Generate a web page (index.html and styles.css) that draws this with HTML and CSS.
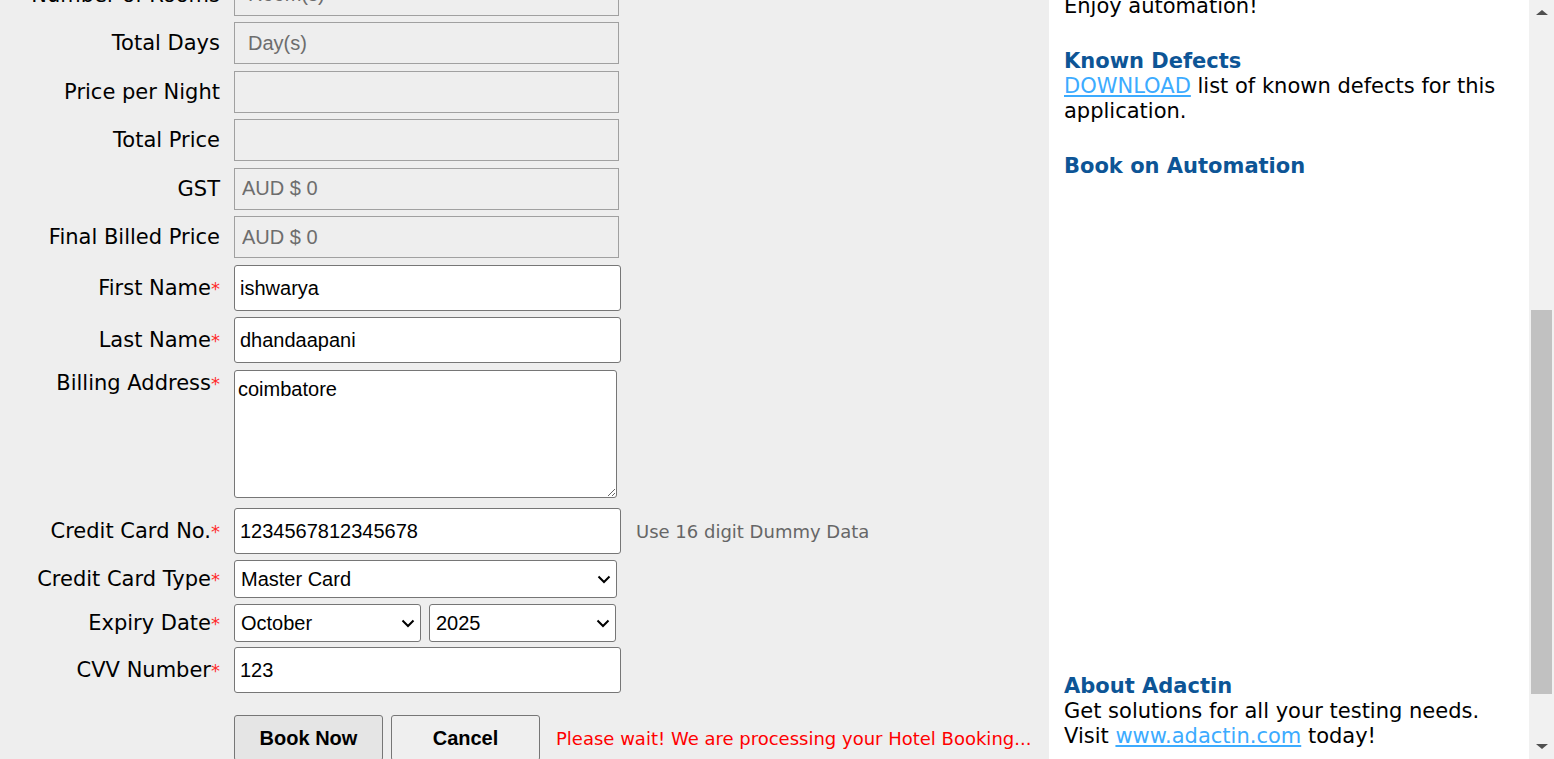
FILE: index.html
```html
<!DOCTYPE html>
<html lang="en">
<head>
<meta charset="utf-8">
<title>Book A Hotel</title>
<link rel="stylesheet" href="styles.css">
</head>
<body>
<div class="page">
  <main class="main">
    <form class="form">
      <div class="row row-ro first">
        <label class="lbl">Number of Rooms</label>
        <input class="ro ro-ph" type="text" value="Room(s)" readonly>
      </div>
      <div class="row row-ro">
        <label class="lbl">Total Days</label>
        <input class="ro ro-ph" type="text" value="Day(s)" readonly>
      </div>
      <div class="row row-ro">
        <label class="lbl">Price per Night</label>
        <input class="ro" type="text" value="" readonly>
      </div>
      <div class="row row-ro">
        <label class="lbl">Total Price</label>
        <input class="ro" type="text" value="" readonly>
      </div>
      <div class="row row-ro">
        <label class="lbl">GST</label>
        <input class="ro" type="text" value="AUD $ 0" readonly>
      </div>
      <div class="row row-ro last-ro">
        <label class="lbl">Final Billed Price</label>
        <input class="ro" type="text" value="AUD $ 0" readonly>
      </div>
      <div class="row row-in">
        <label class="lbl">First Name<span class="req">*</span></label>
        <input class="txt" type="text" value="ishwarya">
      </div>
      <div class="row row-in gap7">
        <label class="lbl">Last Name<span class="req">*</span></label>
        <input class="txt" type="text" value="dhandaapani">
      </div>
      <div class="row row-area">
        <label class="lbl">Billing Address<span class="req">*</span></label>
        <textarea class="area">coimbatore</textarea>
      </div>
      <div class="row row-in">
        <label class="lbl">Credit Card No.<span class="req">*</span></label>
        <input class="txt" type="text" value="1234567812345678">
        <span class="hint">Use 16 digit Dummy Data</span>
      </div>
      <div class="row row-sel">
        <label class="lbl">Credit Card Type<span class="req">*</span></label>
        <span class="selwrap">
          <select class="sel sel-wide"><option>Master Card</option></select>
          <svg class="chev" width="14" height="9" viewBox="0 0 14 9"><path d="M1.5 1.5 L7 7 L12.5 1.5" fill="none" stroke="#000" stroke-width="2"/></svg>
        </span>
      </div>
      <div class="row row-sel">
        <label class="lbl">Expiry Date<span class="req">*</span></label>
        <div class="pair">
          <span class="selwrap">
            <select class="sel sel-month"><option>October</option></select>
            <svg class="chev" width="14" height="9" viewBox="0 0 14 9"><path d="M1.5 1.5 L7 7 L12.5 1.5" fill="none" stroke="#000" stroke-width="2"/></svg>
          </span>
          <span class="selwrap">
            <select class="sel sel-year"><option>2025</option></select>
            <svg class="chev" width="14" height="9" viewBox="0 0 14 9"><path d="M1.5 1.5 L7 7 L12.5 1.5" fill="none" stroke="#000" stroke-width="2"/></svg>
          </span>
        </div>
      </div>
      <div class="row row-in cvv">
        <label class="lbl">CVV Number<span class="req">*</span></label>
        <input class="txt" type="text" value="123">
      </div>
      <div class="row row-btn">
        <span class="lbl"></span>
        <div class="btns">
          <button type="button" class="btn btn-book">Book Now</button>
          <button type="button" class="btn btn-cancel">Cancel</button>
          <span class="wait">Please wait! We are processing your Hotel Booking...</span>
        </div>
      </div>
    </form>
  </main>
  <aside class="side">
    <p class="side-text first-line">Enjoy automation!</p>
    <h3 class="side-head">Known Defects</h3>
    <p class="side-text"><a class="link" href="#">DOWNLOAD</a> list of known defects for this application.</p>
    <h3 class="side-head">Book on Automation</h3>
    <div class="book-space"></div>
    <h3 class="side-head tight">About Adactin</h3>
    <p class="side-text">Get solutions for all your testing needs.<br>Visit <a class="link" href="#">www.adactin.com</a> today!</p>
  </aside>
  <div class="scrollbar">
    <span class="arrow arrow-up"></span>
    <div class="track"><div class="thumb"></div></div>
    <span class="arrow arrow-down"></span>
  </div>
</div>
</body>
</html>
```
FILE: styles.css
```css
* { box-sizing: border-box; }
html, body { margin: 0; padding: 0; }
body {
  height: 759px;
  overflow: hidden;
  font-family: "DejaVu Sans", Verdana, sans-serif;
}
.page {
  display: flex;
  height: 759px;
}
.main {
  width: 1049px;
  flex: none;
  background: #eeeeee;
  overflow: hidden;
}
.form {
  display: flex;
  flex-direction: column;
}
.row {
  display: flex;
  align-items: center;
}
.row.first { margin-top: -26.5px; }
.row-ro { height: 42px; margin-bottom: 6.5px; }
.row-ro.last-ro { margin-bottom: 7px; }
.row-in { height: 46px; margin-bottom: 6px; }
.row-in.gap7 { margin-bottom: 7px; }
.row-area { height: 128px; align-items: flex-start; margin-bottom: 10px; }
.row-sel { height: 38px; margin-bottom: 6px; }
.row.cvv { margin-top: -1px; }
.row-btn { margin-top: 16px; align-items: flex-start; }
.lbl {
  width: 220px;
  flex: none;
  text-align: right;
  margin-right: 14px;
  font-size: 21px;
  color: #000;
  white-space: nowrap;
}
.row-area .lbl { padding-top: 1px; }
.req { color: #ff2a2a; font-size: 18px; }
.ro {
  width: 385px;
  height: 42px;
  margin: 0;
  border: 1px solid #a0a0a0;
  border-radius: 0;
  background: transparent;
  padding: 0 7px;
  font-family: "Liberation Sans", Arial, sans-serif;
  font-size: 20px;
  color: #6d6d6d;
  outline: none;
}
.ro-ph { padding-left: 13px; }
.txt {
  width: 387px;
  height: 46px;
  margin: 0;
  border: 1px solid #767676;
  border-radius: 3px;
  background: #fff;
  padding: 0 5px;
  font-family: "Liberation Sans", Arial, sans-serif;
  font-size: 20px;
  color: #000;
  outline: none;
}
.area {
  width: 383px;
  height: 128px;
  margin: 0;
  border: 1px solid #767676;
  border-radius: 3px;
  background: #fff;
  padding: 7px 3px;
  font-family: "Liberation Sans", Arial, sans-serif;
  font-size: 20px;
  color: #000;
  resize: both;
  outline: none;
}
.hint {
  margin-left: 15px;
  font-size: 18px;
  color: #666666;
  white-space: nowrap;
}
.selwrap {
  position: relative;
  display: block;
}
.chev {
  position: absolute;
  right: 6px;
  top: 15px;
  pointer-events: none;
}
.sel {
  display: block;
  height: 38px;
  margin: 0;
  border: 1px solid #767676;
  border-radius: 3px;
  background: #fff;
  font-family: "Liberation Sans", Arial, sans-serif;
  font-size: 20px;
  color: #000;
  padding: 0 6px;
  -webkit-appearance: none;
  appearance: none;
}
.sel-wide { width: 383px; }
.pair { display: flex; gap: 8px; }
.sel-month { width: 187px; }
.sel-year { width: 187px; }
.btns {
  display: flex;
  align-items: center;
}
.btn {
  width: 149px;
  height: 46px;
  margin: 0 8px 0 0;
  border: 1px solid #767676;
  border-radius: 3px;
  font-family: "Liberation Sans", Arial, sans-serif;
  font-weight: bold;
  font-size: 20px;
  color: #000;
  padding: 0;
}
.btn-book { background: #e5e5e5; }
.btn-cancel { background: #efefef; }
.wait {
  margin-left: 8px;
  font-size: 18px;
  color: #ff0000;
  white-space: nowrap;
}
.side {
  width: 480px;
  flex: none;
  background: #ffffff;
  padding: 0 15px;
  font-size: 21px;
  line-height: 25px;
  color: #000;
}
.side-text { margin: 0; }
.first-line { margin-top: -6px; }
.side-head {
  margin: 30px 0 0;
  font-size: 21px;
  line-height: 25px;
  font-weight: bold;
  color: #0d5596;
}
.side-head.tight { margin-top: 0; }
.book-space { height: 495px; }
.link { color: #3cabff; text-decoration: underline; }
.scrollbar {
  width: 25px;
  flex: none;
  background: #f1f1f1;
  display: flex;
  flex-direction: column;
  align-items: center;
}
.track {
  flex: 1;
  width: 21px;
  padding-top: 289px;
}
.thumb {
  height: 384px;
  background: #c1c1c1;
}
.arrow {
  width: 0;
  height: 0;
  border-left: 6px solid transparent;
  border-right: 6px solid transparent;
  flex: none;
}
.arrow-up {
  margin: 10px 0 6px;
  border-bottom: 5px solid #505050;
}
.arrow-down {
  margin: 6px 0 10px;
  border-top: 5px solid #505050;
}
```
